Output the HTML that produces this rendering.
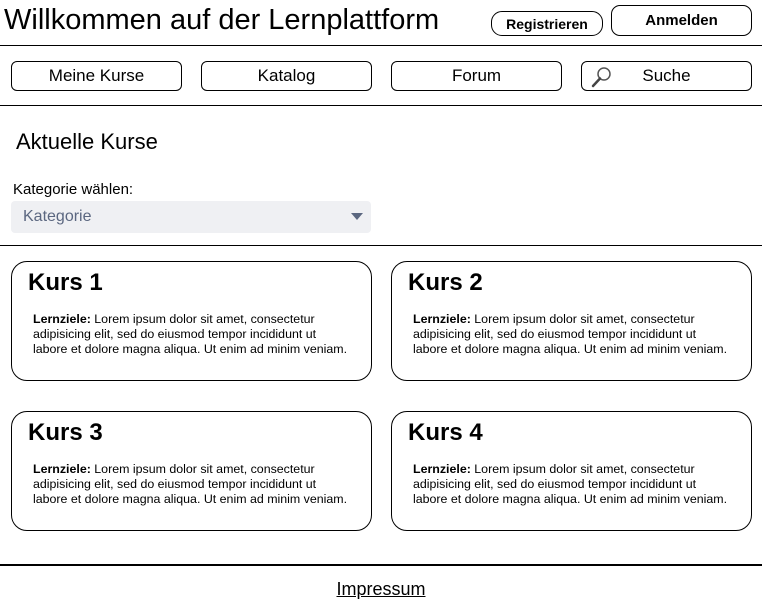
<!DOCTYPE html><html><head><style>
body{margin:0;width:762px;height:602px;position:relative;background:#fff;font-family:"Liberation Sans",Arial,sans-serif;color:#000;overflow:hidden}
.a{position:absolute}
.btn{position:absolute;border:1px solid #000;border-radius:6px;box-sizing:border-box;display:flex;align-items:center;justify-content:center;font-size:17px}
.line{position:absolute;left:0;width:762px;height:1px;background:#000}
.card{position:absolute;border:1px solid #000;border-radius:16px;box-sizing:border-box;width:361px;height:120px}
.card h2{position:absolute;left:16px;top:7px;margin:0;font-size:24px;font-weight:bold}
.card p{position:absolute;left:21px;top:50px;margin:0;font-size:12.4px;line-height:15px;white-space:nowrap}
</style></head><body>
<div class="a" style="left:4px;top:2px;font-size:29px;line-height:36px">Willkommen auf der Lernplattform</div>
<div class="btn" style="left:491px;top:11px;width:112px;height:25px;border-radius:11px;font-size:14px;font-weight:bold">Registrieren</div>
<div class="btn" style="left:611px;top:5px;width:141px;height:31px;border-radius:9px;font-size:15px;font-weight:bold;padding-bottom:1px">Anmelden</div>
<div class="line" style="top:45px"></div>
<div class="btn" style="left:11px;top:61px;width:171px;height:30px">Meine Kurse</div>
<div class="btn" style="left:201px;top:61px;width:171px;height:30px">Katalog</div>
<div class="btn" style="left:391px;top:61px;width:171px;height:30px">Forum</div>
<div class="btn" style="left:581px;top:61px;width:171px;height:30px">Suche
<svg class="a" style="left:9px;top:4px" width="22" height="22" viewBox="0 0 22 22"><circle cx="13" cy="8" r="6" fill="none" stroke="#555" stroke-width="1.5"/><line x1="9" y1="12.5" x2="2" y2="20" stroke="#444" stroke-width="2.5" stroke-linecap="round"/></svg></div>
<div class="line" style="top:105px"></div>
<div class="a" style="left:16px;top:129px;font-size:22px">Aktuelle Kurse</div>
<div class="a" style="left:13px;top:181px;font-size:15px">Kategorie wählen:</div>
<div class="a" style="left:11px;top:201px;width:360px;height:32px;background:#eff0f3;border-radius:4px"><span class="a" style="left:12px;top:7px;font-size:16px;color:#5b6780">Kategorie</span><svg class="a" style="left:340px;top:12px" width="12" height="8"><polygon points="0,0 12,0 6,7" fill="#5b6780"/></svg></div>
<div class="line" style="top:245px"></div>
<div class="card" style="left:11px;top:261px"><h2>Kurs 1</h2><p><b>Lernziele:</b> Lorem ipsum dolor sit amet, consectetur<br>adipisicing elit, sed do eiusmod tempor incididunt ut<br>labore et dolore magna aliqua. Ut enim ad minim veniam.</p></div>
<div class="card" style="left:391px;top:261px"><h2>Kurs 2</h2><p><b>Lernziele:</b> Lorem ipsum dolor sit amet, consectetur<br>adipisicing elit, sed do eiusmod tempor incididunt ut<br>labore et dolore magna aliqua. Ut enim ad minim veniam.</p></div>
<div class="card" style="left:11px;top:411px"><h2>Kurs 3</h2><p><b>Lernziele:</b> Lorem ipsum dolor sit amet, consectetur<br>adipisicing elit, sed do eiusmod tempor incididunt ut<br>labore et dolore magna aliqua. Ut enim ad minim veniam.</p></div>
<div class="card" style="left:391px;top:411px"><h2>Kurs 4</h2><p><b>Lernziele:</b> Lorem ipsum dolor sit amet, consectetur<br>adipisicing elit, sed do eiusmod tempor incididunt ut<br>labore et dolore magna aliqua. Ut enim ad minim veniam.</p></div>
<div class="line" style="top:564px;height:2px"></div>
<div class="a" style="left:0;width:762px;top:579px;text-align:center;font-size:18px;text-decoration:underline">Impressum</div>
</body></html>
